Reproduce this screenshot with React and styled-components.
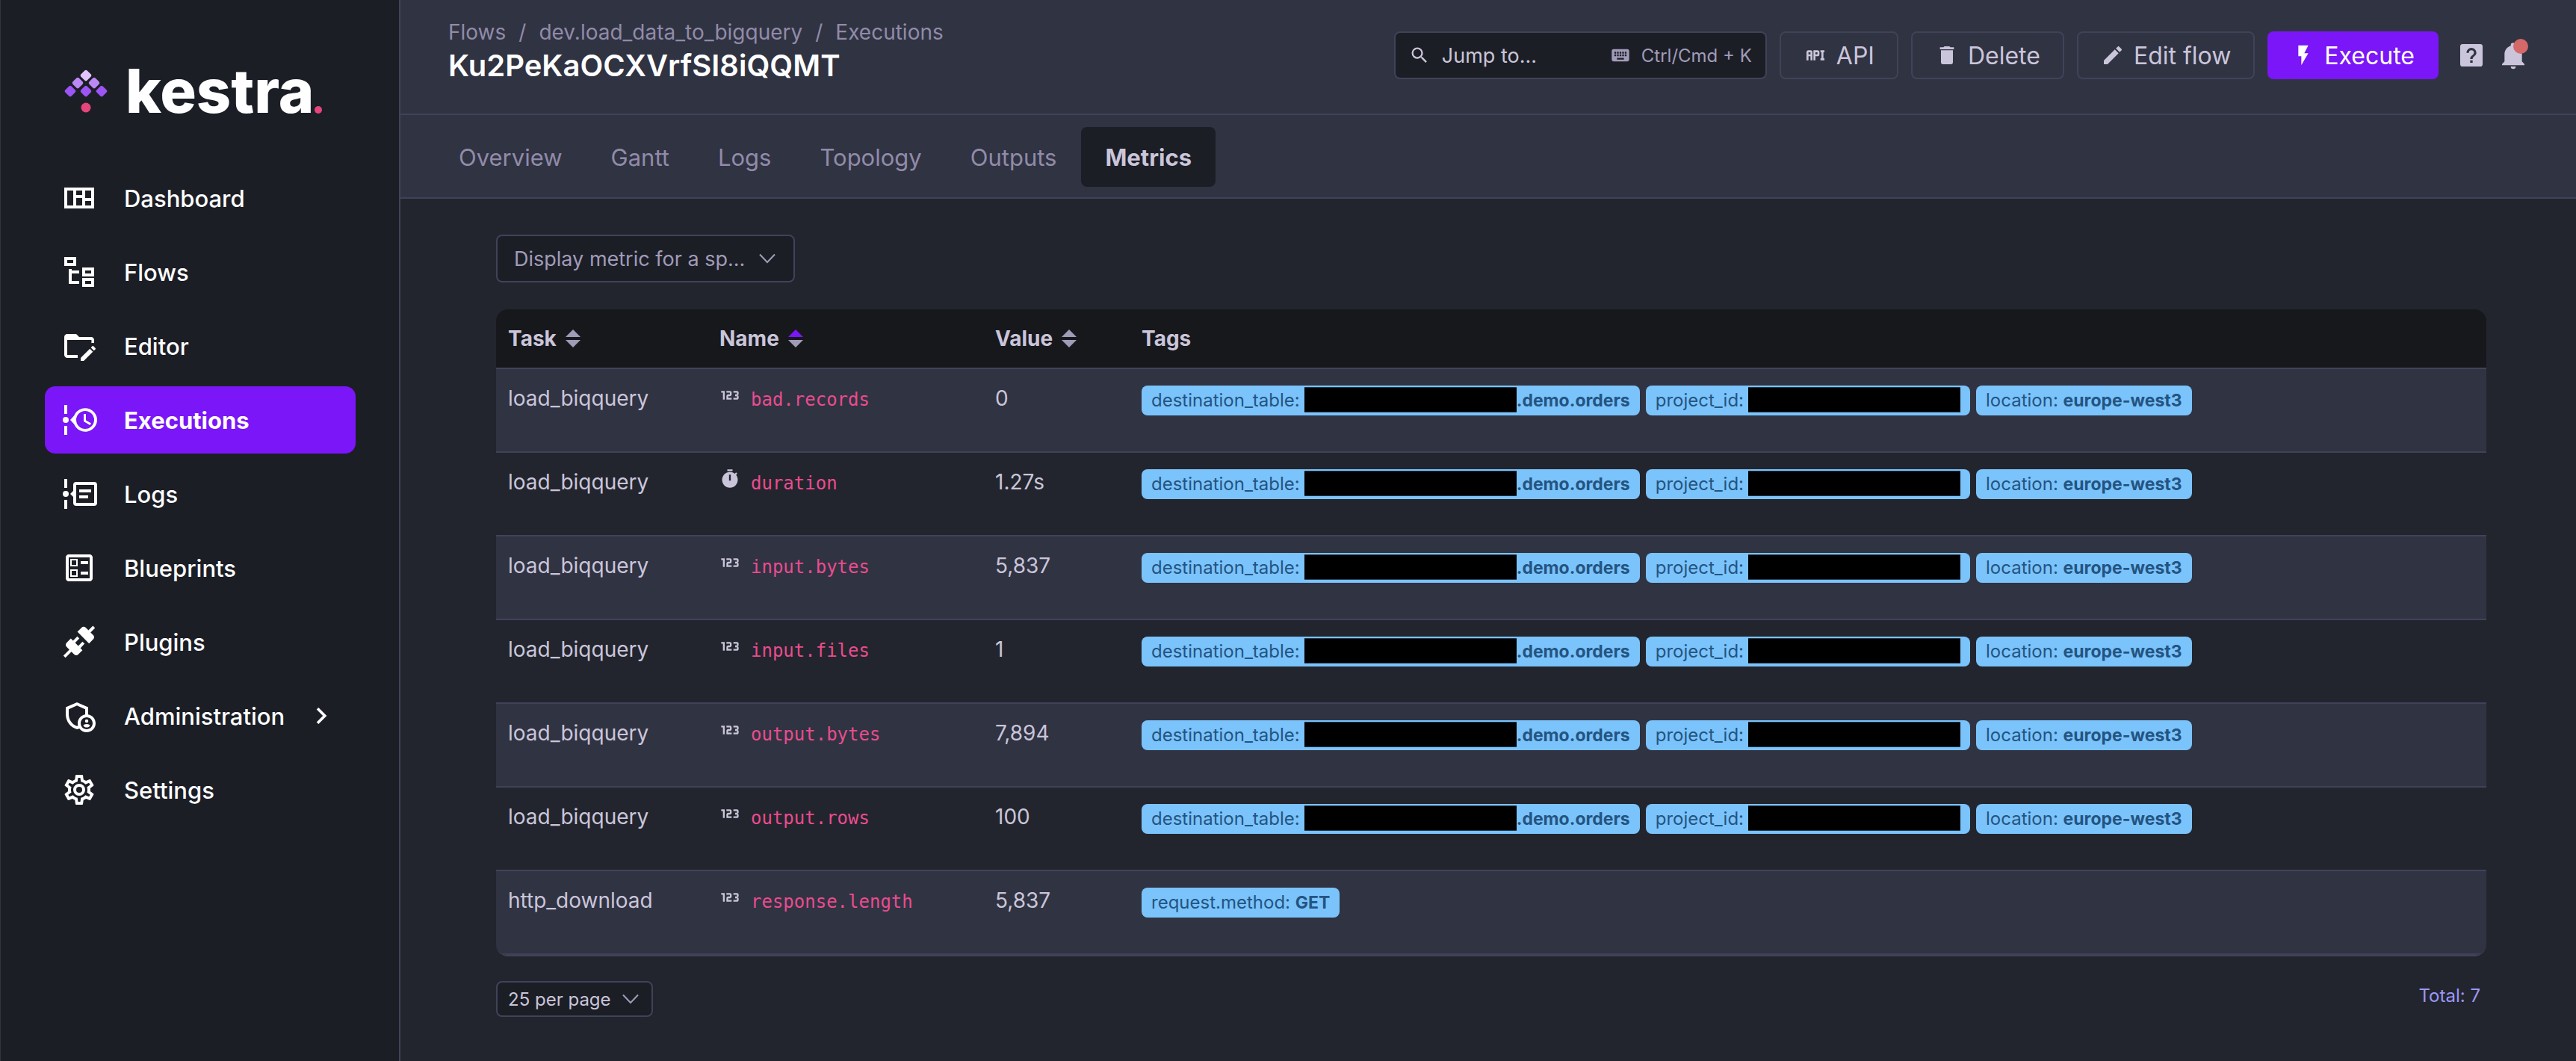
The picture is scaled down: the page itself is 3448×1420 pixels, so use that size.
import React from "react";
import styled, { createGlobalStyle } from "styled-components";
import { MdOutlineAdminPanelSettings } from "react-icons/md";

const color = {
  sidebar: "#1c1e26",
  body: "#22252d",
  panel: "#303342",
  tableHead: "#17181c",
  border: "#404358",
  primary: "#7a16f7",
  text: "#cac5da",
  muted: "#918ba9",
  soft: "#a09bb9",
  code: "#ea4c8f",
  badge: "#7bc3fb",
  badgeText: "#235481",
  total: "#9b97fa",
  danger: "#d56868",
};

const GlobalStyle = createGlobalStyle`
  *, *::before, *::after { box-sizing: border-box; }
  body {
    margin: 0;
    background: ${color.body};
    color: ${color.text};
    font-family: Inter, "Liberation Sans", sans-serif;
    font-size: 28px;
  }
  button, select, input { font-family: inherit; }
  a { color: inherit; text-decoration: none; }
`;

/* ---------- icons ---------- */

const paths = {
  dashboard:
    "M2 5V19H22V5H2M8 17H4V7H8V17M14 17H10V12H14V17M14 10H10V7H14V10M20 17H16V14H20V17M20 12H16V7H20V12Z",
  flows:
    "M12 13H7V18H12V20H5V10H7V11H12V13M8 4V6H4V4H8M10 2H2V8H10V2M20 11V13H16V11H20M22 9H14V15H22V9M20 18V20H16V18H20M22 16H14V22H22V16Z",
  editor:
    "M4 18H11V20H4C2.9 20 2 19.11 2 18V6C2 4.89 2.89 4 4 4H10L12 6H20C21.1 6 22 6.89 22 8V10.17C21.43 9.96 20.8 9.94 20.2 10.09V8H4V18M22.85 13.47L21.53 12.15C21.33 11.95 21 11.95 20.81 12.15L19.83 13.13L21.87 15.17L22.85 14.19C23.05 14 23.05 13.67 22.85 13.47M13 19.96V22H15.04L21.17 15.88L19.13 13.83L13 19.96Z",
  executions:
    "M4 2V8H2V2H4M2 22V16H4V22H2M5 12A2 2 0 1 1 1 12A2 2 0 0 1 5 12M24 12A8 8 0 0 1 8.6 14.9L6 12L8.6 9.1A8 8 0 0 1 24 12M22 12A6 6 0 1 0 10 12A6 6 0 0 0 22 12M15 8H16.5V12.2L20 14.2L19.2 15.5L15 13V8Z",
  logs:
    "M4 2V8H2V2H4M2 22V16H4V22H2M5 12A2 2 0 1 1 1 12A2 2 0 0 1 5 12M24 6V18A2 2 0 0 1 22 20H10A2 2 0 0 1 8 18V14L6 12L8 10V6A2 2 0 0 1 10 4H22A2 2 0 0 1 24 6M22 6H10V18H22V6M12 9H20V11H12V9M12 13H18V15H12V13Z",
  blueprints:
    "M13 7.5H18V9.5H13V7.5M13 14.5H18V16.5H13V14.5M19 3H5C3.9 3 3 3.9 3 5V19C3 20.1 3.9 21 5 21H19C20.1 21 21 20.1 21 19V5C21 3.9 20.1 3 19 3M19 19H5V5H19V19M11 6H6V11H11V6M10 10H7V7H10V10M11 13H6V18H11V13M10 17H7V14H10V17Z",
  plugins:
    "M21.4 7.5C22.2 8.3 22.2 9.6 21.4 10.3L18.6 13.1L10.8 5.3L13.6 2.5C14.4 1.7 15.7 1.7 16.4 2.5L18.2 4.3L21.2 1.3L22.6 2.7L19.6 5.7L21.4 7.5M15.6 13.3L14.2 11.9L11.4 14.7L9.3 12.6L12.1 9.8L10.7 8.4L7.9 11.2L6.4 9.8L3.6 12.6C2.8 13.4 2.8 14.7 3.6 15.4L5.4 17.2L1.4 21.2L2.8 22.6L6.8 18.6L8.6 20.4C9.4 21.2 10.7 21.2 11.4 20.4L14.2 17.6L12.8 16.2L15.6 13.3Z",
  settings:
    "M12,8A4,4 0 0,1 16,12A4,4 0 0,1 12,16A4,4 0 0,1 8,12A4,4 0 0,1 12,8M12,10A2,2 0 0,0 10,12A2,2 0 0,0 12,14A2,2 0 0,0 14,12A2,2 0 0,0 12,10M10,22C9.75,22 9.54,21.82 9.5,21.58L9.13,18.93C8.5,18.68 7.96,18.34 7.44,17.94L4.95,18.95C4.73,19.03 4.46,18.95 4.34,18.73L2.34,15.27C2.21,15.05 2.27,14.78 2.46,14.63L4.57,12.97L4.5,12L4.57,11L2.46,9.37C2.27,9.22 2.21,8.95 2.34,8.73L4.34,5.27C4.46,5.05 4.73,4.96 4.95,5.05L7.44,6.05C7.96,5.66 8.5,5.32 9.13,5.07L9.5,2.42C9.54,2.18 9.75,2 10,2H14C14.25,2 14.46,2.18 14.5,2.42L14.87,5.07C15.5,5.32 16.04,5.66 16.56,6.05L19.05,5.05C19.27,4.96 19.54,5.05 19.66,5.27L21.66,8.73C21.79,8.95 21.73,9.22 21.54,9.37L19.43,11L19.5,12L19.43,13L21.54,14.63C21.73,14.78 21.79,15.05 21.66,15.27L19.66,18.73C19.54,18.95 19.27,19.04 19.05,18.95L16.56,17.95C16.04,18.34 15.5,18.68 14.87,18.93L14.5,21.58C14.46,21.82 14.25,22 14,22H10M11.25,4L10.88,6.61C9.68,6.86 8.62,7.5 7.85,8.39L5.44,7.35L4.69,8.65L6.8,10.2C6.4,11.37 6.4,12.64 6.8,13.8L4.68,15.36L5.43,16.66L7.86,15.62C8.63,16.5 9.68,17.14 10.87,17.38L11.24,20H12.76L13.13,17.39C14.32,17.14 15.37,16.5 16.14,15.62L18.57,16.66L19.32,15.36L17.2,13.81C17.6,12.64 17.6,11.37 17.2,10.2L19.31,8.65L18.56,7.35L16.15,8.39C15.38,7.5 14.32,6.86 13.12,6.62L12.75,4H11.25Z",
  chevronRight: "M8.59,16.58L13.17,12L8.59,7.41L10,6L16,12L10,18L8.59,16.58Z",
  search:
    "M9.5,3A6.5,6.5 0 0,1 16,9.5C16,11.11 15.41,12.59 14.44,13.73L14.71,14H15.5L20.5,19L19,20.5L14,15.5V14.71L13.73,14.44C12.59,15.41 11.11,16 9.5,16A6.5,6.5 0 0,1 3,9.5A6.5,6.5 0 0,1 9.5,3M9.5,5C7,5 5,7 5,9.5C5,12 7,14 9.5,14C12,14 14,12 14,9.5C14,7 12,5 9.5,5Z",
  keyboard:
    "M19,10H17V8H19M19,13H17V11H19M16,10H14V8H16M16,13H14V11H16M16,17H8V15H16M7,10H5V8H7M7,13H5V11H7M8,11H10V13H8M8,8H10V10H8M11,11H13V13H11M11,8H13V10H11M20,5H4C2.89,5 2,5.89 2,7V17A2,2 0 0,0 4,19H20A2,2 0 0,0 22,17V7C22,5.89 21.1,5 20,5Z",
  api:
    "M7 7H5A2 2 0 0 0 3 9V17H5V13H7V17H9V9A2 2 0 0 0 7 7M7 11H5V9H7M14 7H10V17H12V13H14A2 2 0 0 0 16 11V9A2 2 0 0 0 14 7M14 11H12V9H14M20 9V15H21V17H17V15H18V9H17V7H21V9Z",
  trash:
    "M19,4H15.5L14.5,3H9.5L8.5,4H5V6H19M6,19A2,2 0 0,0 8,21H16A2,2 0 0,0 18,19V7H6V19Z",
  pencil:
    "M20.71,7.04C21.1,6.65 21.1,6 20.71,5.63L18.37,3.29C18,2.9 17.35,2.9 16.96,3.29L15.12,5.12L18.87,8.87M3,17.25V21H6.75L17.81,9.93L14.06,6.18L3,17.25Z",
  flash: "M7,2V13H10V22L17,10H13L17,2H7Z",
  help:
    "M5 3H19A2 2 0 0 1 21 5V19A2 2 0 0 1 19 21H5A2 2 0 0 1 3 19V5A2 2 0 0 1 5 3M12 6A4 4 0 0 0 8 10H10A2 2 0 0 1 12 8A2 2 0 0 1 14 10C14 12 11 11.75 11 15H13C13 12.75 16 12.5 16 10A4 4 0 0 0 12 6M11 16V18H13V16H11Z",
  bell:
    "M21,19V20H3V19L5,17V11C5,7.9 7.03,5.17 10,4.29C10,4.19 10,4.1 10,4A2,2 0 0,1 12,2A2,2 0 0,1 14,4C14,4.1 14,4.19 14,4.29C16.97,5.17 19,7.9 19,11V17L21,19M14,21A2,2 0 0,1 12,23A2,2 0 0,1 10,21",
  numeric:
    "M4,17V9H2V7H6V17H4M22,15C22,16.11 21.1,17 20,17H16V15H20V13H18V11H20V9H16V7H20A2,2 0 0,1 22,9V10.5A1.5,1.5 0 0,1 20.5,12A1.5,1.5 0 0,1 22,13.5V15M14,15V17H8V13C8,11.89 8.9,11 10,11H12V9H8V7H12A2,2 0 0,1 14,9V11C14,12.11 13.1,13 12,13H10V15H14Z",
  timer:
    "M19.03 7.39L20.45 5.97C20 5.46 19.55 5 19.04 4.56L17.62 6C16.07 4.74 14.12 4 12 4C7.03 4 3 8.03 3 13S7.03 22 12 22C17 22 21 17.97 21 13C21 10.88 20.26 8.93 19.03 7.39M13 14H11V7H13V14M15 1H9V3H15V1Z",
};

const Svg = styled.svg`
  width: ${(p) => p.$size}px;
  height: ${(p) => p.$size}px;
  flex: none;
  fill: currentColor;
  fill-rule: evenodd;
`;

function Icon({ name, size = 32 }) {
  return (
    <Svg $size={size} viewBox="0 0 24 24" aria-hidden="true">
      <path d={paths[name]} />
    </Svg>
  );
}

const ChevronSvg = styled.svg`
  grid-area: 1 / 1;
  justify-self: end;
  align-self: center;
  width: 22px;
  height: 14px;
  margin-right: ${(p) => p.$inset}px;
  fill: none;
  stroke: ${color.soft};
  stroke-width: 2;
  pointer-events: none;
`;

const SortSvg = styled.svg`
  width: 20px;
  height: 24px;
  fill: ${color.soft};
`;

const SortUp = styled.path`
  fill: ${(p) => (p.$active ? color.primary : color.soft)};
`;

/* ---------- page shell ---------- */

const Page = styled.div`
  display: flex;
  min-height: 100vh;
`;

const Sidebar = styled.aside`
  flex: none;
  width: 536px;
  padding: 90px 58px 40px 59px;
  background: ${color.sidebar};
  border-left: 1px solid #33353f;
  border-right: 2px solid ${color.border};
`;

const Brand = styled.a`
  display: flex;
  align-items: center;
  height: 64px;
  margin: 0 0 66px 26px;
`;

const BrandMark = styled.svg`
  width: 58px;
  height: 58px;
`;

const BrandName = styled.span`
  margin-left: 24px;
  color: #fff;
  font-size: 81px;
  font-weight: 800;
  line-height: 64px;
`;

const BrandDot = styled.span`
  align-self: flex-end;
  width: 10px;
  height: 10px;
  margin: 0 0 2px 1px;
  border-radius: 50%;
  background: #e5457b;
`;

const NavList = styled.ul`
  display: flex;
  flex-direction: column;
  gap: 9px;
  margin: 0;
  padding: 0;
  list-style: none;
`;

const NavLink = styled.a`
  display: flex;
  align-items: center;
  height: 90px;
  padding: 0 24px 0 22px;
  border-radius: 14px;
  background: ${(p) => (p.$active ? color.primary : "transparent")};
  color: #fff;
  font-size: 31px;
  font-weight: ${(p) => (p.$active ? 700 : 500)};

  svg:last-child {
    margin-left: auto;
  }
`;

const NavLabel = styled.span`
  margin-left: 36px;
`;

const Main = styled.main`
  flex: 1;
  min-width: 0;
`;

/* ---------- header ---------- */

const Header = styled.header`
  display: flex;
  align-items: flex-start;
  justify-content: space-between;
  padding: 22px 64px 40px;
  background: ${color.panel};
  border-bottom: 2px solid ${color.border};
`;

const Crumbs = styled.ol`
  display: flex;
  margin: 0;
  padding: 0;
  list-style: none;
  color: ${color.muted};
  font-size: 28px;
  line-height: 42px;

  li + li::before {
    content: "/";
    margin: 0 17px;
  }
`;

const Title = styled.h1`
  margin: 0;
  color: #fff;
  font-size: 40px;
  font-weight: 600;
  line-height: 48px;
`;

const Actions = styled.div`
  display: flex;
  align-items: center;
  gap: 17px;
  margin-top: 20px;
`;

const SearchBox = styled.label`
  display: flex;
  align-items: center;
  width: 499px;
  height: 64px;
  padding: 0 18px;
  border: 2px solid ${color.border};
  border-radius: 8px;
  background: ${color.sidebar};
  color: ${color.text};
`;

const SearchInput = styled.input`
  flex: 1;
  min-width: 0;
  margin-left: 16px;
  padding: 0;
  border: 0;
  outline: 0;
  background: transparent;
  color: ${color.text};
  font-size: 27px;

  &::placeholder {
    color: ${color.text};
    opacity: 1;
  }
`;

const Shortcut = styled.span`
  display: flex;
  align-items: center;
  gap: 14px;
  color: ${color.soft};
  font-size: 24px;
`;

const Button = styled.button`
  display: flex;
  align-items: center;
  gap: 12px;
  height: 64px;
  padding: 0 30px;
  border: 2px solid ${(p) => (p.$primary ? color.primary : color.border)};
  border-radius: 8px;
  background: ${(p) => (p.$primary ? color.primary : color.panel)};
  color: ${(p) => (p.$primary ? "#fff" : color.text)};
  font-size: 32px;
`;

const IconButton = styled.button`
  position: relative;
  display: flex;
  padding: 0;
  border: 0;
  background: none;
  color: ${color.text};
`;

const IconGroup = styled.div`
  display: flex;
  gap: 16px;
  margin-left: 7px;
`;

const AlertDot = styled.span`
  position: absolute;
  top: -2px;
  right: 0;
  width: 20px;
  height: 20px;
  border-radius: 50%;
  background: ${color.danger};
`;

/* ---------- tabs ---------- */

const Tabs = styled.nav`
  display: flex;
  gap: 1px;
  padding: 16px 46px 14px;
  background: ${color.panel};
  border-bottom: 2px solid ${color.border};
`;

const Tab = styled.a`
  display: flex;
  align-items: center;
  height: 80px;
  padding: 0 32px;
  border-radius: 8px;
  background: ${(p) => (p.$active ? color.sidebar : "transparent")};
  color: ${(p) => (p.$active ? color.text : color.muted)};
  font-size: 31px;
  font-weight: ${(p) => (p.$active ? 700 : 400)};
`;

/* ---------- content ---------- */

const Content = styled.section`
  padding: 48px 120px 56px 128px;
`;

const SelectBox = styled.div`
  display: inline-grid;
  width: ${(p) => p.$width}px;
`;

const Select = styled.select`
  grid-area: 1 / 1;
  width: 100%;
  height: ${(p) => (p.$small ? 48 : 64)}px;
  padding: 0 0 0 ${(p) => (p.$small ? 14 : 22)}px;
  appearance: none;
  border: 2px solid ${color.border};
  border-radius: 8px;
  background: ${color.sidebar};
  color: ${(p) => (p.$small ? color.text : color.soft)};
  font-size: ${(p) => (p.$small ? 24 : 27)}px;
`;

const TableFrame = styled.div`
  margin: 36px 0 33px;
  overflow: hidden;
  border-bottom: 2px solid ${color.border};
  border-radius: 16px;
`;

const Table = styled.table`
  width: 100%;
  table-layout: fixed;
  border-collapse: separate;
  border-spacing: 0;
`;

const Col = styled.col`
  width: ${(p) => (p.$width ? `${p.$width}px` : "auto")};
`;

const HeadCell = styled.th`
  height: 80px;
  padding: 0 16px;
  border-bottom: 2px solid ${color.border};
  background: ${color.tableHead};
  color: ${color.text};
  font-size: 28px;
  font-weight: 700;
  text-align: left;
`;

const SortButton = styled.button`
  display: flex;
  align-items: center;
  gap: 12px;
  padding: 0;
  border: 0;
  background: none;
  color: inherit;
  font-size: 28px;
  font-weight: 700;
`;

const Row = styled.tr`
  &:nth-child(odd) {
    background: ${color.panel};
  }
`;

const Cell = styled.td`
  height: 112px;
  padding: 16px;
  border-bottom: 2px solid ${color.border};
  font-size: 28px;
  line-height: 46px;
  vertical-align: top;
  white-space: nowrap;
`;

const Metric = styled.code`
  margin-left: 14px;
  color: ${color.code};
  font-family: "DejaVu Sans Mono", "Liberation Mono", monospace;
  font-size: 24px;
  line-height: 1;
`;

const Badges = styled.div`
  display: flex;
  gap: 8px;
  padding-top: 6px;
`;

const Badge = styled.span`
  display: flex;
  align-items: center;
  height: 40px;
  padding: 0 13px;
  border-radius: 8px;
  background: ${color.badge};
  color: ${color.badgeText};
  font-size: 24px;
  line-height: 40px;
  white-space: pre;
`;

const BadgeValue = styled.strong`
  font-size: 23px;
  font-weight: 700;
`;

const Redacted = styled.span`
  width: 284px;
  height: 34px;
  margin: 0 0 2px 6px;
  border: 1px solid #1d3950;
  border-width: 1px 0;
  background: #000;
`;

const Footer = styled.footer`
  display: flex;
  align-items: flex-start;
  justify-content: space-between;
`;

const Total = styled.span`
  padding-right: 8px;
  color: ${color.total};
  font-size: 24px;
  line-height: 40px;
`;

/* ---------- data ---------- */

const navItems = [
  { label: "Dashboard", icon: "dashboard" },
  { label: "Flows", icon: "flows" },
  { label: "Editor", icon: "editor" },
  { label: "Executions", icon: "executions", active: true },
  { label: "Logs", icon: "logs" },
  { label: "Blueprints", icon: "blueprints" },
  { label: "Plugins", icon: "plugins" },
  { label: "Administration", icon: "admin", expandable: true },
  { label: "Settings", icon: "settings" },
];

const tabs = ["Overview", "Gantt", "Logs", "Topology", "Outputs", "Metrics"];

const bigQueryTags = [
  { key: "destination_table", redacted: true, value: ".demo.orders" },
  { key: "project_id", redacted: true },
  { key: "location", value: "europe-west3" },
];

const metrics = [
  { task: "load_biqquery", name: "bad.records", value: "0", tags: bigQueryTags },
  { task: "load_biqquery", name: "duration", timer: true, value: "1.27s", tags: bigQueryTags },
  { task: "load_biqquery", name: "input.bytes", value: "5,837", tags: bigQueryTags },
  { task: "load_biqquery", name: "input.files", value: "1", tags: bigQueryTags },
  { task: "load_biqquery", name: "output.bytes", value: "7,894", tags: bigQueryTags },
  { task: "load_biqquery", name: "output.rows", value: "100", tags: bigQueryTags },
  { task: "http_download", name: "response.length", value: "5,837", tags: [{ key: "request.method", value: "GET" }] },
];

/* ---------- parts ---------- */

const diamonds = [
  [29, 8, "#e2c6fb"],
  [18, 18, "#bb88f6"],
  [40, 18, "#bb88f6"],
  [8, 29, "#9c54f4"],
  [29, 29, "#9c54f4"],
  [50, 29, "#9c54f4"],
];

function Logo() {
  return (
    <Brand href="#" aria-label="kestra">
      <BrandMark viewBox="0 0 58 58" aria-hidden="true">
        {diamonds.map(([x, y, fill]) => (
          <rect
            key={`${x}-${y}`}
            x={x - 5.8}
            y={y - 5.8}
            width="11.6"
            height="11.6"
            rx="2.4"
            fill={fill}
            transform={`rotate(45 ${x} ${y})`}
          />
        ))}
        <circle cx="29" cy="51" r="6.5" fill="#e5457b" />
      </BrandMark>
      <BrandName>kestra</BrandName>
      <BrandDot />
    </Brand>
  );
}

function Chevron({ inset }) {
  return (
    <ChevronSvg $inset={inset} viewBox="0 0 22 14" aria-hidden="true">
      <path d="M1 1.5L11 12L21 1.5" />
    </ChevronSvg>
  );
}

function Sortable({ label, active }) {
  return (
    <HeadCell scope="col" aria-sort={active ? "ascending" : undefined}>
      <SortButton type="button">
        {label}
        <SortSvg viewBox="0 0 20 24" aria-hidden="true">
          <SortUp $active={active} d="M0 10L10 0L20 10Z" />
          <path d="M0 14L10 24L20 14Z" />
        </SortSvg>
      </SortButton>
    </HeadCell>
  );
}

function Tag({ tag }) {
  return (
    <Badge>
      {tag.key}:{tag.redacted ? <Redacted /> : " "}
      {tag.value && <BadgeValue>{tag.value}</BadgeValue>}
    </Badge>
  );
}

export default function App() {
  return (
    <>
      <GlobalStyle />
      <Page>
        <Sidebar>
          <Logo />
          <nav aria-label="Main">
            <NavList>
              {navItems.map((item) => (
                <li key={item.label}>
                  <NavLink href="#" $active={item.active}>
                    {item.icon === "admin" ? (
                      <MdOutlineAdminPanelSettings size={48} aria-hidden="true" />
                    ) : (
                      <Icon name={item.icon} size={48} />
                    )}
                    <NavLabel>{item.label}</NavLabel>
                    {item.expandable && <Icon name="chevronRight" size={44} />}
                  </NavLink>
                </li>
              ))}
            </NavList>
          </nav>
        </Sidebar>

        <Main>
          <Header>
            <div>
              <Crumbs>
                <li><a href="#">Flows</a></li>
                <li><a href="#">dev.load_data_to_bigquery</a></li>
                <li><a href="#">Executions</a></li>
              </Crumbs>
              <Title>Ku2PeKaOCXVrfSI8iQQMT</Title>
            </div>
            <Actions>
              <SearchBox>
                <Icon name="search" size={28} />
                <SearchInput type="text" placeholder="Jump to..." aria-label="Jump to" />
                <Shortcut>
                  <Icon name="keyboard" size={28} />
                  Ctrl/Cmd + K
                </Shortcut>
              </SearchBox>
              <Button type="button"><Icon name="api" />API</Button>
              <Button type="button"><Icon name="trash" />Delete</Button>
              <Button type="button"><Icon name="pencil" />Edit flow</Button>
              <Button type="button" $primary><Icon name="flash" />Execute</Button>
              <IconGroup>
                <IconButton type="button" aria-label="Help">
                  <Icon name="help" size={40} />
                </IconButton>
                <IconButton type="button" aria-label="Notifications">
                  <Icon name="bell" size={40} />
                  <AlertDot />
                </IconButton>
              </IconGroup>
            </Actions>
          </Header>

          <Tabs aria-label="Execution">
            {tabs.map((tab) => (
              <Tab key={tab} href="#" $active={tab === "Metrics"}>{tab}</Tab>
            ))}
          </Tabs>

          <Content>
            <SelectBox $width={400}>
              <Select aria-label="Task filter">
                <option>Display metric for a sp...</option>
              </Select>
              <Chevron inset={26} />
            </SelectBox>

            <TableFrame>
              <Table>
                <colgroup>
                  <Col $width={283} />
                  <Col $width={369} />
                  <Col $width={196} />
                  <Col />
                </colgroup>
                <thead>
                  <tr>
                    <Sortable label="Task" />
                    <Sortable label="Name" active />
                    <Sortable label="Value" />
                    <HeadCell scope="col">Tags</HeadCell>
                  </tr>
                </thead>
                <tbody>
                  {metrics.map((m) => (
                    <Row key={m.name}>
                      <Cell>{m.task}</Cell>
                      <Cell>
                        <Icon name={m.timer ? "timer" : "numeric"} size={28} />
                        <Metric>{m.name}</Metric>
                      </Cell>
                      <Cell>{m.value}</Cell>
                      <Cell>
                        <Badges>
                          {m.tags.map((tag) => <Tag key={tag.key} tag={tag} />)}
                        </Badges>
                      </Cell>
                    </Row>
                  ))}
                </tbody>
              </Table>
            </TableFrame>

            <Footer>
              <SelectBox $width={210}>
                <Select $small aria-label="Rows per page">
                  <option>25 per page</option>
                </Select>
                <Chevron inset={19} />
              </SelectBox>
              <Total>Total: 7</Total>
            </Footer>
          </Content>
        </Main>
      </Page>
    </>
  );
}
